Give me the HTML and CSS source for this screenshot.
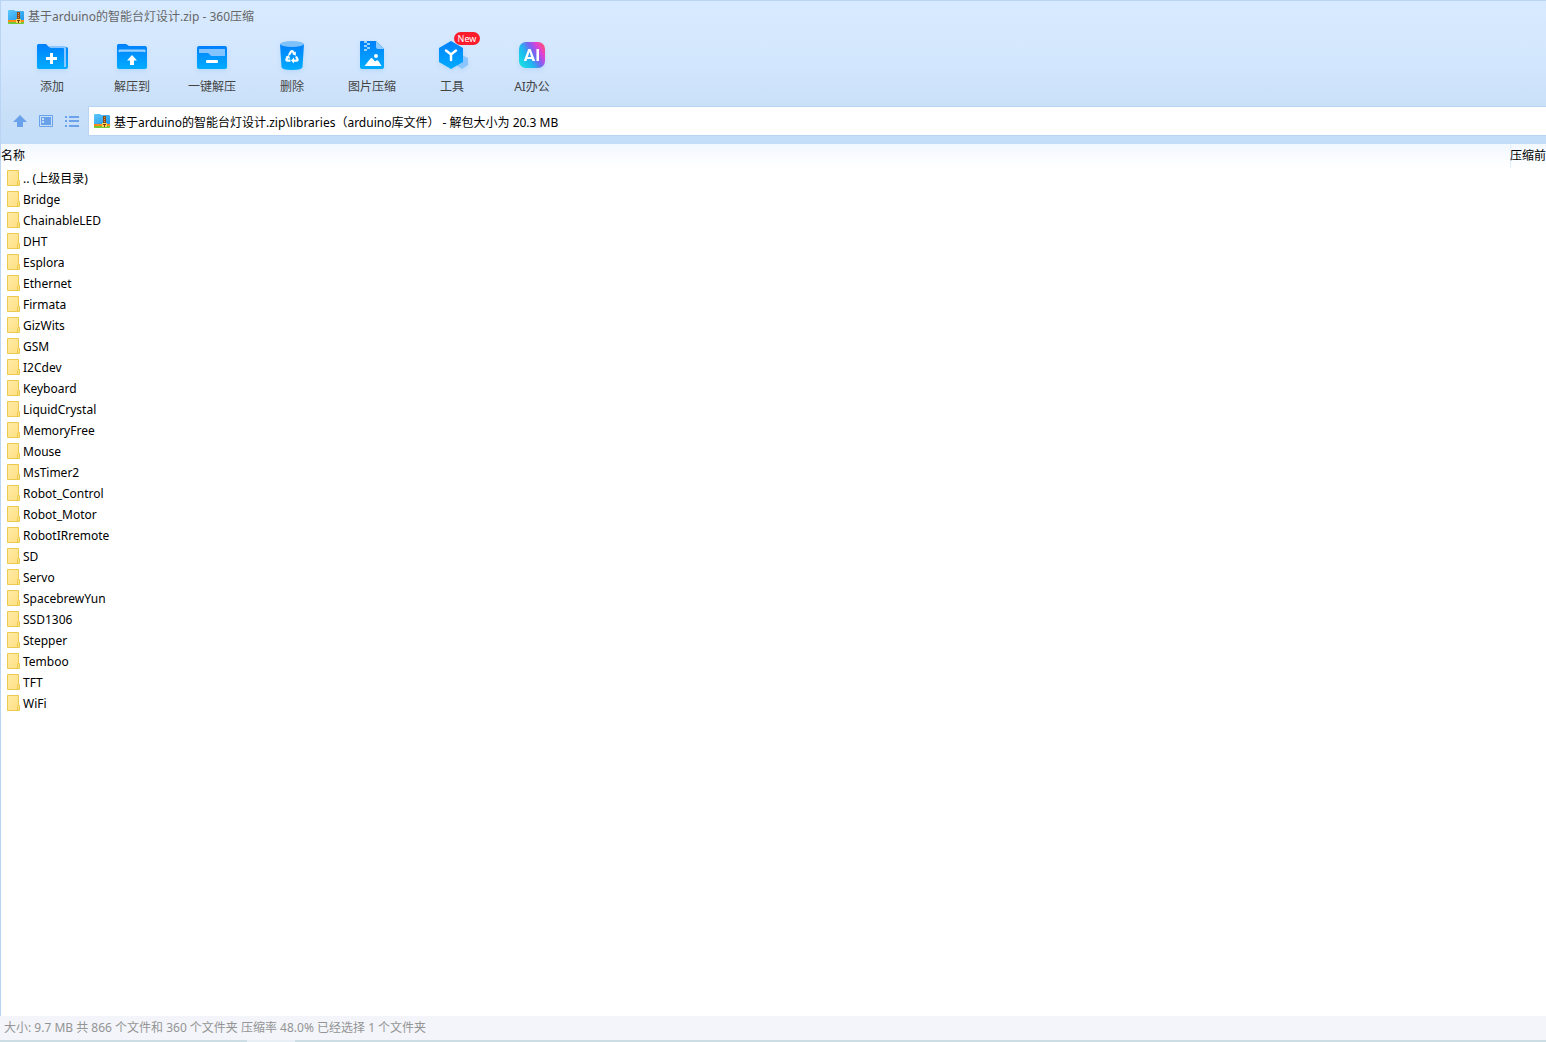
FILE: index.html
```html
<!DOCTYPE html>
<html lang="zh-CN">
<head>
<meta charset="utf-8">
<title>基于arduino的智能台灯设计.zip - 360压缩</title>
<link rel="stylesheet" href="styles.css">
</head>
<body>
<svg class="defs" width="0" height="0" aria-hidden="true">
  <defs>
    <linearGradient id="blue" x1="0" y1="0" x2="0" y2="1"><stop offset="0" stop-color="#0080fc"/><stop offset="1" stop-color="#00acff"/></linearGradient>
    <linearGradient id="sky" x1="0" y1="0" x2="1" y2="1"><stop offset="0" stop-color="#5cc8fa"/><stop offset="1" stop-color="#1e94ea"/></linearGradient>
    <linearGradient id="paper" x1="0" y1="0" x2="1" y2="1"><stop offset="0" stop-color="#ffeba6"/><stop offset="1" stop-color="#ffdf82"/></linearGradient>
    <linearGradient id="ai" x1="0" y1=".8" x2="1" y2=".2"><stop offset="0" stop-color="#18dfe2"/><stop offset=".35" stop-color="#20b5f0"/><stop offset=".6" stop-color="#7a62f2"/><stop offset=".8" stop-color="#dc42d8"/><stop offset="1" stop-color="#ff4c78"/></linearGradient>
    <symbol id="archive" viewBox="0 0 16 14">
      <path d="M0 1q0-1 1-1h5l1 1h8q1 0 1 1v9H0z" fill="url(#sky)"/>
      <path d="M0 10h16v2H0z" fill="#ff8a16"/><path d="M0 12h16v1q0 1-1 1H1q-1 0-1-1z" fill="#72c935"/>
      <path d="M9 2h3v11H9z" fill="#8d4a14"/><path d="M10 3h1v1h-1zm0 2h1v1h-1zm0 2h1v1h-1z" fill="#d99a52"/>
      <path d="M8 9h5v4H8z" fill="#ffd35a"/><path d="M9 10h3v1H9zm1 1h1v2h-1z" fill="#7b3d12"/>
    </symbol>
    <symbol id="folder" viewBox="0 0 13 16">
      <path d="M.5.5h11v10h1v5H.5z" fill="url(#paper)" stroke="#ecc94f"/>
      <path d="M10.500 15v-3.500q0-1 1-1" fill="none" stroke="#ecc94f"/>
    </symbol>
  </defs>
</svg>
<header class="chrome">
  <div class="titlebar">
    <svg class="archive-icon" aria-hidden="true"><use href="#archive"/></svg>
    <span>基于arduino的智能台灯设计.zip - 360压缩</span>
  </div>
  <nav class="toolbar" aria-label="工具栏">
    <button class="tool" type="button">
      <svg class="tool-icon" viewBox="0 0 32 32"><path d="M1 5.500Q1 4 2.500 4H10l3 3h17q2 0 2 2v18q0 2-2 2H2.500Q1 29 1 27z" fill="url(#blue)"/><path d="M13 6h15q2 0 2 2v19h-2V9q0-1-1-1H14z" fill="#8ac6ff"/><path d="M14 13h3v4h4v3h-4v4h-3v-4h-4v-3h4z" fill="#fff"/></svg>
      <span>添加</span>
    </button>
    <button class="tool" type="button">
      <svg class="tool-icon" viewBox="0 0 32 32"><path d="M1 5.500Q1 4 2.500 4H10l3 2h16q2 0 2 2v19q0 2-2 2H3q-2 0-2-2z" fill="url(#blue)"/><path d="M3 10h26v2q-1-.8-2-.8H5q-1 0-2 .8z" fill="#99d0ff" stroke="#99d0ff"/><path d="M16 15l5 5.500h-3V25h-4v-4.500h-3z" fill="#fff"/></svg>
      <span>解压到</span>
    </button>
    <button class="tool" type="button">
      <svg class="tool-icon" viewBox="0 0 32 32"><rect x="1" y="6" width="30" height="23" rx="2" fill="url(#blue)"/><path d="M3 9h26v7H16q-1.500 0-2.300-1.500T11 13H3z" fill="#83c3ff"/><rect x="10" y="20" width="12" height="3" rx="1" fill="#fff"/></svg>
      <span>一键解压</span>
    </button>
    <button class="tool" type="button">
      <svg class="tool-icon" viewBox="0 0 32 32"><path d="M4 4h24l-1.500 23q-.3 3-10.500 3T5.500 27z" fill="url(#blue)"/><ellipse cx="16" cy="4" rx="12" ry="3" fill="#7fc2fb"/><g fill="none" stroke="#fff" stroke-width="2.200"><path d="M13 15l2-3.300q1-1.400 2 0l1.500 2.500M20 16.500l1.400 2.400q.8 1.600-1 1.700H17M14.500 20.600h-2.800q-2-.1-1.100-1.700L12 16.500"/></g><path d="M19.800 11.600v4.200l-3.600-1.700zM18 17.600v6l-3-3zM9.500 17l3.400-2.100 1.300 4z" fill="#fff"/></svg>
      <span>删除</span>
    </button>
    <button class="tool" type="button">
      <svg class="tool-icon" viewBox="0 0 32 32"><path d="M4 2q0-1 1-1h15l8 8v18q0 2-2 2H6q-2 0-2-2z" fill="url(#blue)"/><path d="M20 1l8 8h-6q-2 0-2-2z" fill="#91cbff"/><path d="M8 1h3v2H8zm3 2h3v2h-3zM8 5h3v2H8zm3 2h3v2h-3zM8 9h3v2H8z" fill="#9bd3ff"/><circle cx="20" cy="16" r="2" fill="#fff"/><path d="M8.500 26l6-7.500q1-1 2 0l2.500 3 1.500-1q1-.6 2 .5l3 5z" fill="#fff"/></svg>
      <span>图片压缩</span>
    </button>
    <button class="tool" type="button">
      <svg class="tool-icon" viewBox="0 0 32 32"><path d="M26 15l6 3v7l-6 4-6-4v-7z" fill="#8bc5ff"/><path d="M15 1l12 7v14l-12 7-12-7V8z" fill="url(#blue)"/><path d="M10 10.500l5 4 5-4M15 14.500V20" fill="none" stroke="#fff" stroke-width="2.500" stroke-linecap="round"/></svg>
      <span>工具</span>
      <span class="badge">New</span>
    </button>
    <button class="tool" type="button">
      <svg class="tool-icon" viewBox="0 0 32 32"><rect x="3" y="2" width="26" height="26" rx="7" fill="url(#ai)"/><text class="ai-mark" x="16" y="21" text-anchor="middle">AI</text></svg>
      <span>AI办公</span>
    </button>
  </nav>
  <div class="location">
    <button class="nav" type="button" aria-label="上级目录"><svg viewBox="0 0 14 14"><path d="M7 1l7 7h-4v5H4V8H0z" fill="#69a1ea"/></svg></button>
    <button class="nav" type="button" aria-label="预览"><svg viewBox="0 0 14 14"><path d="M.5 1.500h13v11H.5z" fill="none" stroke="#69a1ea"/><path d="M2 3h10v8H2z" fill="#69a1ea"/><path d="M3 4h2v2H3zm0 3h2v2H3z" fill="#c5def9"/></svg></button>
    <button class="nav" type="button" aria-label="列表"><svg viewBox="0 0 14 14"><path d="M0 2h2v2H0zm4 0h10v2H4zM0 6h2v2H0zm4 0h10v2H4zM0 11h2v2H0zm4 0h10v2H4z" fill="#69a1ea"/></svg></button>
    <div class="address">
      <svg class="archive-icon" aria-hidden="true"><use href="#archive"/></svg>
      <input class="path" type="text" aria-label="路径" value="基于arduino的智能台灯设计.zip\libraries（arduino库文件） - 解包大小为 20.3 MB">
    </div>
  </div>
</header>
<main class="files">
  <table class="list">
    <thead><tr><th scope="col">名称</th><th class="size" scope="col">压缩前</th></tr></thead>
    <tbody>
      <tr><td><svg class="folder" aria-hidden="true"><use href="#folder"/></svg>.. (上级目录)</td><td></td></tr>
      <tr><td><svg class="folder" aria-hidden="true"><use href="#folder"/></svg>Bridge</td><td></td></tr>
      <tr><td><svg class="folder" aria-hidden="true"><use href="#folder"/></svg>ChainableLED</td><td></td></tr>
      <tr><td><svg class="folder" aria-hidden="true"><use href="#folder"/></svg>DHT</td><td></td></tr>
      <tr><td><svg class="folder" aria-hidden="true"><use href="#folder"/></svg>Esplora</td><td></td></tr>
      <tr><td><svg class="folder" aria-hidden="true"><use href="#folder"/></svg>Ethernet</td><td></td></tr>
      <tr><td><svg class="folder" aria-hidden="true"><use href="#folder"/></svg>Firmata</td><td></td></tr>
      <tr><td><svg class="folder" aria-hidden="true"><use href="#folder"/></svg>GizWits</td><td></td></tr>
      <tr><td><svg class="folder" aria-hidden="true"><use href="#folder"/></svg>GSM</td><td></td></tr>
      <tr><td><svg class="folder" aria-hidden="true"><use href="#folder"/></svg>I2Cdev</td><td></td></tr>
      <tr><td><svg class="folder" aria-hidden="true"><use href="#folder"/></svg>Keyboard</td><td></td></tr>
      <tr><td><svg class="folder" aria-hidden="true"><use href="#folder"/></svg>LiquidCrystal</td><td></td></tr>
      <tr><td><svg class="folder" aria-hidden="true"><use href="#folder"/></svg>MemoryFree</td><td></td></tr>
      <tr><td><svg class="folder" aria-hidden="true"><use href="#folder"/></svg>Mouse</td><td></td></tr>
      <tr><td><svg class="folder" aria-hidden="true"><use href="#folder"/></svg>MsTimer2</td><td></td></tr>
      <tr><td><svg class="folder" aria-hidden="true"><use href="#folder"/></svg>Robot_Control</td><td></td></tr>
      <tr><td><svg class="folder" aria-hidden="true"><use href="#folder"/></svg>Robot_Motor</td><td></td></tr>
      <tr><td><svg class="folder" aria-hidden="true"><use href="#folder"/></svg>RobotIRremote</td><td></td></tr>
      <tr><td><svg class="folder" aria-hidden="true"><use href="#folder"/></svg>SD</td><td></td></tr>
      <tr><td><svg class="folder" aria-hidden="true"><use href="#folder"/></svg>Servo</td><td></td></tr>
      <tr><td><svg class="folder" aria-hidden="true"><use href="#folder"/></svg>SpacebrewYun</td><td></td></tr>
      <tr><td><svg class="folder" aria-hidden="true"><use href="#folder"/></svg>SSD1306</td><td></td></tr>
      <tr><td><svg class="folder" aria-hidden="true"><use href="#folder"/></svg>Stepper</td><td></td></tr>
      <tr><td><svg class="folder" aria-hidden="true"><use href="#folder"/></svg>Temboo</td><td></td></tr>
      <tr><td><svg class="folder" aria-hidden="true"><use href="#folder"/></svg>TFT</td><td></td></tr>
      <tr><td><svg class="folder" aria-hidden="true"><use href="#folder"/></svg>WiFi</td><td></td></tr>
    </tbody>
  </table>
</main>
<footer class="status">大小: 9.7 MB 共 866 个文件和 360 个文件夹 压缩率 48.0% 已经选择 1 个文件夹</footer>
</body>
</html>
```
FILE: styles.css
```css
* { box-sizing: border-box; }

body {
  margin: 0;
  min-height: 100vh;
  display: flex;
  flex-direction: column;
  background: #fff;
  color: #000;
  font: 12px/20px "Noto Sans", "Noto Sans CJK SC", sans-serif;
}

button, input { font: inherit; color: inherit; border: 0; padding: 0; background: none; }

.defs { position: absolute; }

.chrome {
  border-top: 1px solid #b9d5f3;
  border-left: 1px solid #b9d5f3;
  padding-bottom: 8px;
  background: linear-gradient(#d8eaff, #d2e6fd 45%, #c8dff8 80%, #c3ddf9);
}

.titlebar {
  display: flex;
  align-items: center;
  gap: 4px;
  height: 31px;
  padding-left: 7px;
  color: #666;
}

.archive-icon { flex: none; width: 16px; height: 14px; }

.toolbar { display: flex; padding: 8px 0 9px 11px; }

.tool {
  position: relative;
  display: flex;
  flex-direction: column;
  align-items: center;
  gap: 5px;
  width: 80px;
  color: #444;
}

.tool-icon { width: 32px; height: 32px; filter: drop-shadow(0 2px 2px #78b4f040); }

.ai-mark { font: bold 17px Roboto, sans-serif; fill: #fff; }

.badge {
  position: absolute;
  top: -8px;
  left: 42px;
  width: 26px;
  height: 13px;
  border-radius: 7px;
  background: #fb1c2c;
  color: #fff;
  font-size: 9px;
  line-height: 13px;
}

.location { display: flex; align-items: center; padding-left: 12px; }

.nav { display: flex; width: 26px; }
.nav svg { width: 14px; height: 14px; }

.address {
  flex: 1;
  display: flex;
  align-items: center;
  gap: 4px;
  height: 30px;
  margin-left: -3px;
  padding-left: 5px;
  border: 1px solid #b9d5f3;
  border-right: 0;
  background: #fff;
}

.path { flex: 1; min-width: 0; height: 22px; padding-top: 2px; outline: 0; }

.files { flex: 1; border-left: 1px solid #b9d5f3; }

.list { width: 100%; table-layout: fixed; border-collapse: collapse; }

.list th {
  height: 24px;
  padding: 0;
  background: linear-gradient(#f2f8ff, #fff);
  font-weight: normal;
  text-align: left;
}

.list .size {
  width: 36px;
  box-shadow: inset 1px 0 #e3f0fd;
  white-space: nowrap;
}

.list td { height: 21px; padding: 0 0 0 6px; line-height: 21px; }

.folder { width: 13px; height: 16px; margin: 2px 3px 0 0; vertical-align: top; }

.status {
  height: 26px;
  padding: 2px 4px;
  background:
    linear-gradient(90deg, #ccdde4 247px, #e9f0f5 247px 295px, #ccdde4 295px) bottom / 100% 2px no-repeat,
    #f3f5fa;
  color: #949494;
}
```
